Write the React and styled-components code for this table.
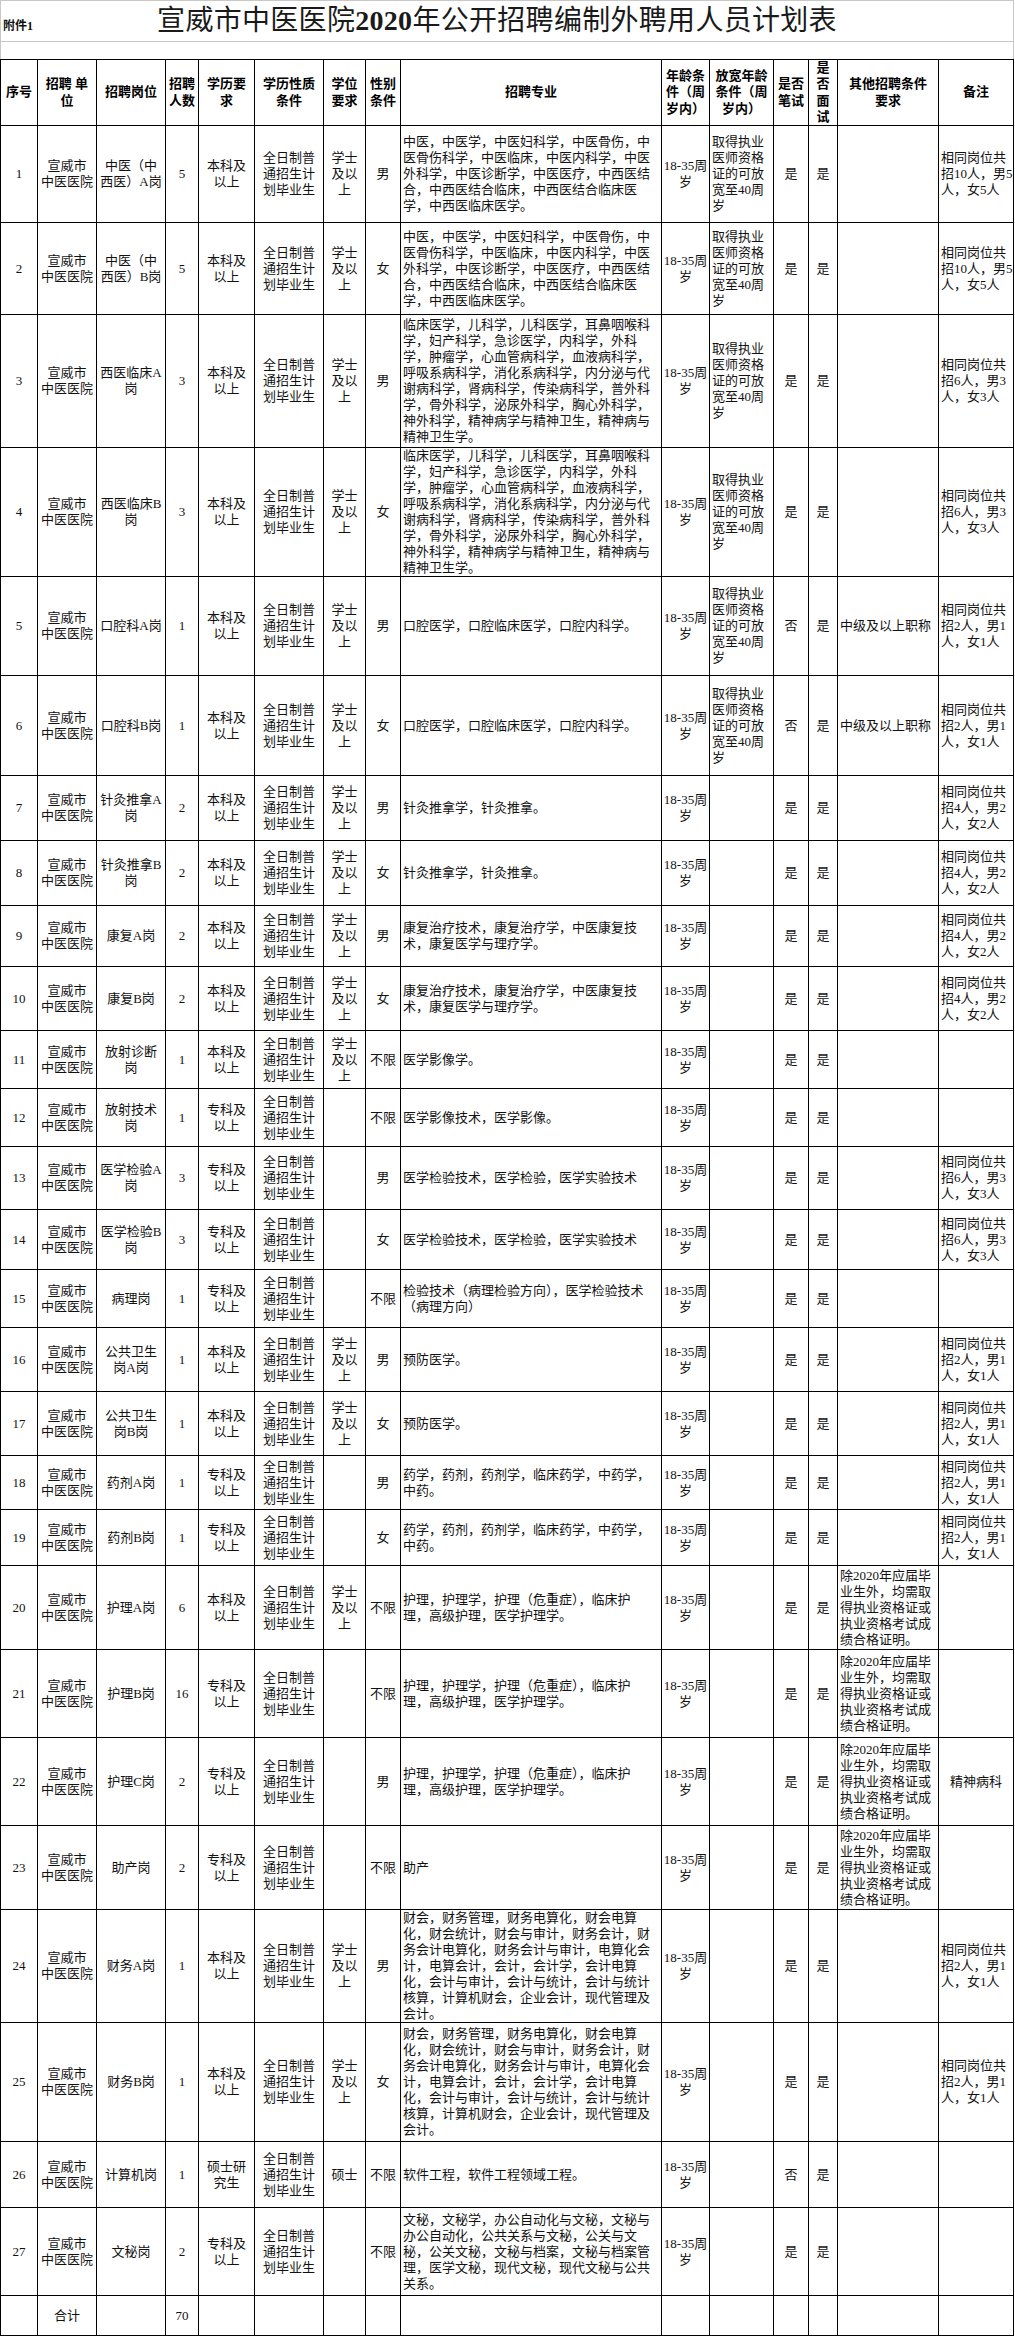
import React from "react";
import styled, { createGlobalStyle } from "styled-components";

const GlobalStyle = createGlobalStyle`
  html, body {
    margin: 0;
    padding: 0;
    background: #fff;
  }
  body {
    font-family: "Liberation Serif", "Noto Sans CJK SC", serif;
    color: #111;
  }
`;

// column widths incl. right border, measured off the sheet
const COLS = [37, 59, 69, 33, 56, 69, 42, 35, 261, 48, 64, 35, 29, 101, 75];
const ALIGN = ["c", "c", "c", "c", "c", "c", "c", "c", "l", "c", "l", "c", "c", "l", "l"];
const template = COLS.map((w) => `${w}px`).join(" ");

const Sheet = styled.div`
  width: 1014px;
`;

const TitleBar = styled.div`
  display: grid;
  grid-template-columns: 37px 1fr 57px;
  height: 42px;
  box-sizing: border-box;
  border: 1px solid #c8c8c8;
`;

const Attachment = styled.div`
  align-self: end;
  padding: 0 0 7px 2px;
  font-size: 12px;
  font-weight: bold;
  white-space: nowrap;
`;

const Title = styled.h1`
  margin: 0;
  align-self: center;
  text-align: center;
  font-size: 28px;
  line-height: 34px;
  font-weight: normal;
  letter-spacing: 0.3px;
  color: #1a1a1a;

  b {
    font-weight: bold;
  }
`;

const Spacer = styled.div`
  height: 17px;
  border-left: 1px solid #c8c8c8;
  border-right: 1px solid #c8c8c8;
`;

const Table = styled.div`
  border-top: 1px solid #000;
  border-left: 1px solid #000;
`;

const Row = styled.div`
  display: grid;
  grid-template-columns: ${template};
  height: ${(p) => p.$h}px;
`;

const Cell = styled.div`
  box-sizing: border-box;
  display: flex;
  align-items: center;
  justify-content: ${(p) => (p.$align === "l" ? "flex-start" : "center")};
  text-align: ${(p) => (p.$align === "l" ? "left" : "center")};
  padding: 0 ${(p) => (p.$align === "l" ? "0 0 2px" : "1px")};
  border-right: 1px solid #000;
  border-bottom: 1px solid #000;
  font-size: 13px;
  line-height: 16px;
  white-space: pre;
  overflow: hidden;
`;

const HeadCell = styled(Cell)`
  font-weight: bold;
  color: #000;
  line-height: 16.5px;
`;

const UNIT = "宣威市\n中医医院";
const FT = "全日制普\n通招生计\n划毕业生";
const BK = "本科及\n以上";
const ZK = "专科及\n以上";
const XS = "学士\n及以\n上";
const AGE = "18-35周\n岁";
const RELAX = "取得执业\n医师资格\n证的可放\n宽至40周\n岁";
const ZJ = "中级及以上职称";
const NURSE = "除2020年应届毕\n业生外，均需取\n得执业资格证或\n执业资格考试成\n绩合格证明。";
const note = (t, m, f) => `相同岗位共\n招${t}人，男${m}\n人，女${f}人`;

const ZY =
  "中医，中医学，中医妇科学，中医骨伤，中\n医骨伤科学，中医临床，中医内科学，中医\n外科学，中医诊断学，中医医疗，中西医结\n合，中西医结合临床，中西医结合临床医\n学，中西医临床医学。";
const XY =
  "临床医学，儿科学，儿科医学，耳鼻咽喉科\n学，妇产科学，急诊医学，内科学，外科\n学，肿瘤学，心血管病科学，血液病科学，\n呼吸系病科学，消化系病科学，内分泌与代\n谢病科学，肾病科学，传染病科学，普外科\n学，骨外科学，泌尿外科学，胸心外科学，\n神外科学，精神病学与精神卫生，精神病与\n精神卫生学。";
const KQ = "口腔医学，口腔临床医学，口腔内科学。";
const ZJTN = "针灸推拿学，针灸推拿。";
const KF = "康复治疗技术，康复治疗学，中医康复技\n术，康复医学与理疗学。";
const JY = "医学检验技术，医学检验，医学实验技术";
const YF = "预防医学。";
const YJ = "药学，药剂，药剂学，临床药学，中药学，\n中药。";
const HL = "护理，护理学，护理（危重症），临床护\n理，高级护理，医学护理学。";
const CW =
  "财会，财务管理，财务电算化，财会电算\n化，财会统计，财会与审计，财务会计，财\n务会计电算化，财务会计与审计，电算化会\n计，电算会计，会计，会计学，会计电算\n化，会计与审计，会计与统计，会计与统计\n核算，计算机财会，企业会计，现代管理及\n会计。";
const WM =
  "文秘，文秘学，办公自动化与文秘，文秘与\n办公自动化，公共关系与文秘，公关与文\n秘，公关文秘，文秘与档案，文秘与档案管\n理，医学文秘，现代文秘，现代文秘与公共\n关系。";

const HEAD = [
  "序号",
  "招聘 单\n位",
  "招聘岗位",
  "招聘\n人数",
  "学历要\n求",
  "学历性质\n条件",
  "学位\n要求",
  "性别\n条件",
  "招聘专业",
  "年龄条\n件（周\n岁内）",
  "放宽年龄\n条件（周\n岁内）",
  "是否\n笔试",
  "是\n否\n面\n试",
  "其他招聘条件\n要求",
  "备注",
];

// [height, post, num, edu, degree, gender, major, relax, written, other, note]
const ROWS = [
  [97, "中医（中\n西医）A岗", 5, BK, XS, "男", ZY, RELAX, "是", "", note(10, 5, 5)],
  [92, "中医（中\n西医）B岗", 5, BK, XS, "女", ZY, RELAX, "是", "", note(10, 5, 5)],
  [133, "西医临床A\n岗", 3, BK, XS, "男", XY, RELAX, "是", "", note(6, 3, 3)],
  [129, "西医临床B\n岗", 3, BK, XS, "女", XY, RELAX, "是", "", note(6, 3, 3)],
  [99, "口腔科A岗", 1, BK, XS, "男", KQ, RELAX, "否", ZJ, note(2, 1, 1)],
  [100, "口腔科B岗", 1, BK, XS, "女", KQ, RELAX, "否", ZJ, note(2, 1, 1)],
  [65, "针灸推拿A\n岗", 2, BK, XS, "男", ZJTN, "", "是", "", note(4, 2, 2)],
  [65, "针灸推拿B\n岗", 2, BK, XS, "女", ZJTN, "", "是", "", note(4, 2, 2)],
  [61, "康复A岗", 2, BK, XS, "男", KF, "", "是", "", note(4, 2, 2)],
  [64, "康复B岗", 2, BK, XS, "女", KF, "", "是", "", note(4, 2, 2)],
  [58, "放射诊断\n岗", 1, BK, XS, "不限", "医学影像学。", "", "是", "", ""],
  [58, "放射技术\n岗", 1, ZK, "", "不限", "医学影像技术，医学影像。", "", "是", "", ""],
  [63, "医学检验A\n岗", 3, ZK, "", "男", JY, "", "是", "", note(6, 3, 3)],
  [60, "医学检验B\n岗", 3, ZK, "", "女", JY, "", "是", "", note(6, 3, 3)],
  [58, "病理岗", 1, ZK, "", "不限", "检验技术（病理检验方向），医学检验技术\n（病理方向）", "", "是", "", ""],
  [64, "公共卫生\n岗A岗", 1, BK, XS, "男", YF, "", "是", "", note(2, 1, 1)],
  [64, "公共卫生\n岗B岗", 1, BK, XS, "女", YF, "", "是", "", note(2, 1, 1)],
  [54, "药剂A岗", 1, ZK, "", "男", YJ, "", "是", "", note(2, 1, 1)],
  [56, "药剂B岗", 1, ZK, "", "女", YJ, "", "是", "", note(2, 1, 1)],
  [84, "护理A岗", 6, BK, XS, "不限", HL, "", "是", NURSE, ""],
  [88, "护理B岗", 16, ZK, "", "不限", HL, "", "是", NURSE, ""],
  [88, "护理C岗", 2, ZK, "", "男", HL, "", "是", NURSE, { text: "精神病科", align: "c" }],
  [84, "助产岗", 2, ZK, "", "不限", "助产", "", "是", NURSE, ""],
  [113, "财务A岗", 1, BK, XS, "男", CW, "", "是", "", note(2, 1, 1)],
  [119, "财务B岗", 1, BK, XS, "女", CW, "", "是", "", note(2, 1, 1)],
  [66, "计算机岗", 1, "硕士研\n究生", "硕士", "不限", "软件工程，软件工程领域工程。", "", "否", "", ""],
  [88, "文秘岗", 2, ZK, "", "不限", WM, "", "是", "", ""],
];

function toCells(row, i) {
  const [, post, num, edu, degree, gender, major, relax, written, other, remark] = row;
  return [
    String(i + 1),
    UNIT,
    post,
    String(num),
    edu,
    FT,
    degree,
    gender,
    major,
    AGE,
    relax,
    written,
    "是",
    other,
    remark,
  ];
}

const total = ROWS.reduce((sum, r) => sum + r[2], 0);

function App() {
  return (
    <>
      <GlobalStyle />
      <Sheet>
        <TitleBar>
          <Attachment>附件1</Attachment>
          <Title>
            宣威市中医医院<b>2020</b>年公开招聘编制外聘用人员计划表
          </Title>
          <div />
        </TitleBar>
        <Spacer />
        <Table>
          <Row $h={66}>
            {HEAD.map((h, i) => (
              <HeadCell key={i}>{h}</HeadCell>
            ))}
          </Row>
          {ROWS.map((row, i) => (
            <Row key={i} $h={row[0]}>
              {toCells(row, i).map((c, j) => {
                const text = typeof c === "object" ? c.text : c;
                const align = typeof c === "object" ? c.align : ALIGN[j];
                return (
                  <Cell key={j} $align={align}>
                    {text}
                  </Cell>
                );
              })}
            </Row>
          ))}
          <Row $h={40}>
            {COLS.map((_, j) => (
              <Cell key={j}>{j === 1 ? "合计" : j === 3 ? String(total) : ""}</Cell>
            ))}
          </Row>
        </Table>
      </Sheet>
    </>
  );
}

export default App;
